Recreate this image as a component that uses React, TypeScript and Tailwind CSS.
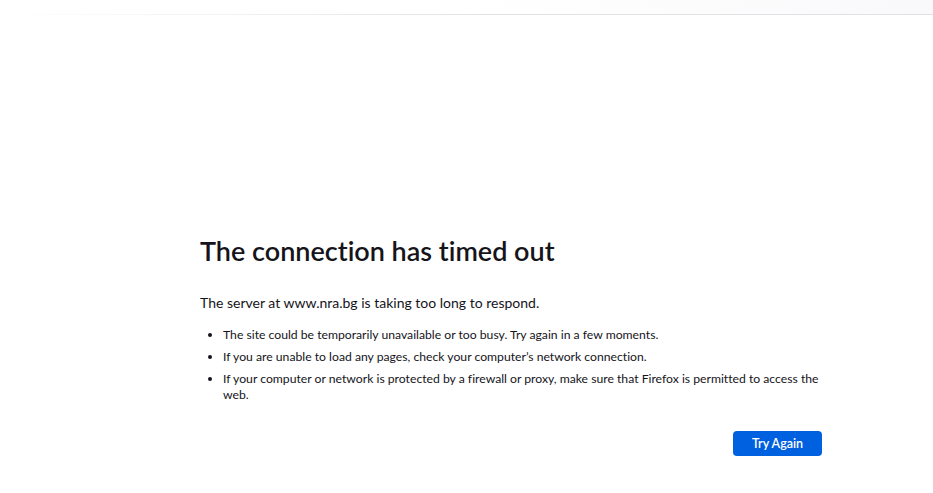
export default function App() {
  const tips = [
    "The site could be temporarily unavailable or too busy. Try again in a few moments.",
    "If you are unable to load any pages, check your computer\u2019s network connection.",
    "If your computer or network is protected by a firewall or proxy, make sure that Firefox is permitted to access the web.",
  ];

  return (
    <div
      className="h-[493px] w-[933px] overflow-hidden bg-white text-[#15141a] [font-variant-ligatures:none]"
      style={{ fontFamily: 'Lato, "Open Sans", sans-serif' }}
    >
      {/* faded toolbar edge */}
      <div className="h-[15px] bg-gradient-to-r from-white via-white to-[#f9f9fb]">
        <div className="h-[14px]" />
        <div className="h-px bg-gradient-to-r from-transparent via-[#e4e4e7] to-[#e0e0e6]" />
      </div>

      <div className="pl-[200px] pt-[218px]">
        <div className="w-[622px]">
          <h1 className="text-[27px] font-semibold leading-[36px]">
            The connection has timed out
          </h1>
          <p className="mt-[23px] text-[14px] leading-[22px]">
            The server at www.nra.bg is taking too long to respond.
          </p>
          <ul className="mt-[13px] list-disc pl-[23px] text-[12.2px] leading-[16px]">
            {tips.map((t) => (
              <li key={t} className="mb-[6px] pl-0">
                {t}
              </li>
            ))}
          </ul>
          <div className="mt-[28px] flex justify-end">
            <button className="h-[25px] w-[89px] rounded-[4px] bg-[#0061e0] pt-px text-[12.5px] font-semibold text-white">
              Try Again
            </button>
          </div>
        </div>
      </div>
    </div>
  );
}
